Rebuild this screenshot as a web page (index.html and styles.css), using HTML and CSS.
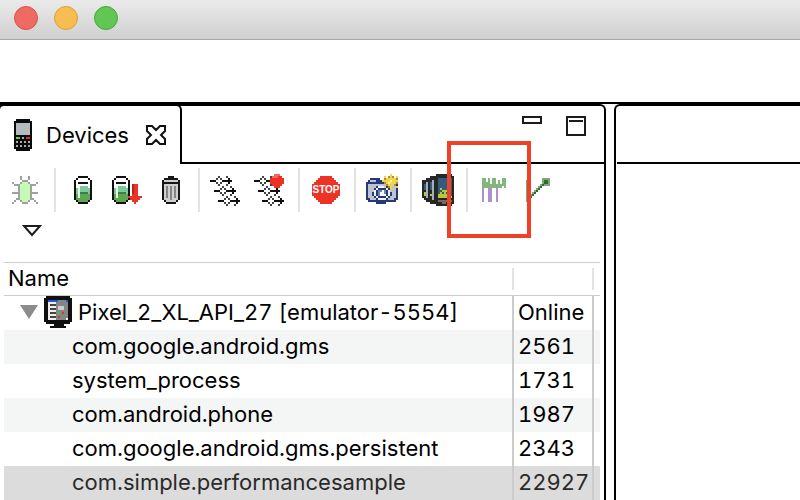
FILE: index.html
```html
<!DOCTYPE html>
<html lang="en">
<head>
<meta charset="utf-8">
<title>Devices</title>
<link rel="stylesheet" href="styles.css">
</head>
<body>
<header class="titlebar">
  <button class="light light-close" aria-label="Close"></button>
  <button class="light light-minimize" aria-label="Minimize"></button>
  <button class="light light-zoom" aria-label="Zoom"></button>
</header>
<div class="coolbar"></div>
<main class="workbench">
  <section class="panel panel-devices">
    <div class="tabs">
      <div class="tab">
        <svg class="icon" viewBox="0 -.5 16 16">
          <path stroke="#0a0a0a" d="M3 0h7M2 1h9M2 2h9M2 3h9M2 4h9M2 5h9M2 6h9M2 7h9M2 8h9M2 9h9M2 10h9M2 11h9M2 12h9M2 13h9M2 14h9M3 15h7"/>
          <path stroke="#b4babd" d="M3 2h7M3 3h7M3 4h7M3 5h7M3 6h7M3 7h7"/>
          <path stroke="#55dd33" d="M3 9h2"/><path stroke="#e32b20" d="M8 9h2"/>
          <path stroke="#aaa" d="M6 9h1M3 11h1M5 11h1M7 11h1M9 11h1M3 13h1M5 13h1M7 13h1M9 13h1"/>
        </svg>
        <span class="tab-title">Devices</span>
        <button class="tab-close" aria-label="Close tab">
          <svg width="22" height="22" viewBox="0 0 22 22"><path fill="#fff" stroke="#111" stroke-width="2" d="M2 2h5l4 4 4-4h5v5l-4 4 4 4v5h-5l-4-4-4 4H2v-5l4-4-4-4z"/></svg>
        </button>
      </div>
      <div class="tab-space">
        <button class="pane-button" aria-label="Minimize view"><svg width="20" height="20" viewBox="0 0 20 20"><path fill="#fff" stroke="#1b1b1b" stroke-width="2" d="M1 1h18v6H1z"/></svg></button>
        <button class="pane-button" aria-label="Maximize view"><svg width="20" height="20" viewBox="0 0 20 20"><path fill="#fff" stroke="#1b1b1b" stroke-width="2" d="M1 1h18v18H1zM3 5h14"/></svg></button>
      </div>
    </div>
    <div class="toolbar">
      <button class="tool" aria-label="Debug">
        <svg class="icon" viewBox="0 -.5 16 16">
          <path stroke="#a0a0a0" d="M5 1h1M9 1h1M5 2h1M9 2h1M6 3h3M1 4h1M5 4h1M9 4h1M13 4h1M2 5h2M4 5h1M10 5h1M11 5h2M4 6h1M10 6h1M4 7h1M10 7h1M4 8h1M10 8h1M1 9h4M10 9h4M4 10h1M10 10h1M4 11h1M10 11h1M3 12h2M10 12h2M2 13h1M5 13h1M9 13h1M12 13h1M1 14h1M6 14h3M13 14h1"/>
          <path stroke="#c6fbb6" d="M6 4h3M5 5h5M5 6h5M5 7h5M5 8h5M5 9h5M5 10h5M5 11h5M5 12h5M6 13h3"/>
        </svg>
      </button>
      <span class="divider"></span>
      <button class="tool" aria-label="Update Heap">
        <svg class="icon" viewBox="0 -.5 16 16">
          <g id="jar">
            <path stroke="#fff" d="M6 2h5M5 3h7M6 4h5M5 5h7M5 6h7"/>
            <path stroke="#7dcb9a" d="M7 6h4M5 7h7M5 8h7M5 9h7"/>
            <path stroke="#3f7c4d" d="M6 9h5"/>
            <path stroke="#5fa653" d="M5 10h7M5 11h7M5 12h7M5 13h7M6 14h5"/>
            <path stroke="#e4f2e4" d="M6 7h1M6 8h1M6 9h1M6 10h1M6 11h1"/>
            <path stroke="#111" d="M6 1h5M5 2h1M11 2h1M4 3h1M12 3h1M4 4h1M6 4h5M12 4h1M4 5h1M12 5h1M4 6h1M12 6h1M4 7h1M12 7h1M4 8h1M12 8h1M4 9h1M12 9h1M4 10h1M12 10h1M4 11h1M12 11h1M4 12h1M12 12h1M5 13h1M11 13h1M6 14h5"/>
          </g>
        </svg>
      </button>
      <button class="tool" aria-label="Dump HPROF file">
        <svg class="icon" viewBox="0 -.5 16 16">
          <use href="#jar" x="-3"/>
          <path stroke="#e8352b" d="M11 5h3M11 6h3M11 7h3M11 8h3M11 9h3M11 10h3M9 11h7M10 12h5M11 13h3M12 14h1"/>
          <path stroke="#b9231c" d="M11 5h1M11 6h1M11 7h1M11 8h1M11 9h1"/>
        </svg>
      </button>
      <button class="tool" aria-label="Cause GC">
        <svg class="icon" viewBox="0 -.5 16 16">
          <path stroke="#cfcfcf" d="M5 3h7M5 5h7M5 6h7M5 7h7M5 8h7M5 9h7M5 10h7M5 11h7M5 12h7M6 13h5"/>
          <path stroke="#858585" d="M6 6h1M8 6h1M10 6h1M6 7h1M8 7h1M10 7h1M6 8h1M8 8h1M10 8h1M6 9h1M8 9h1M10 9h1M6 10h1M8 10h1M10 10h1M6 11h1M8 11h1M10 11h1M8 12h1"/>
          <path stroke="#161616" d="M7 1h3M5 2h7M4 3h1M12 3h1M4 4h9M4 5h1M12 5h1M4 6h1M12 6h1M4 7h1M12 7h1M4 8h1M12 8h1M4 9h1M12 9h1M4 10h1M12 10h1M4 11h1M12 11h1M4 12h1M12 12h1M5 13h1M11 13h1M6 14h5"/>
        </svg>
      </button>
      <span class="divider"></span>
      <button class="tool" aria-label="Update Threads">
        <svg class="icon" viewBox="0 -.5 16 16">
          <g id="threads">
            <g id="thread">
              <path stroke="#444" d="M4 1h1M3 2h1M5 2h1M3 4h1M5 4h1M4 5h1M8 1h1M8 5h1"/>
              <path stroke="#111" d="M0 3h3M6 3h5M9 2h1M9 4h1"/>
            </g>
            <use href="#thread" x="2" y="5"/>
            <use href="#thread" x="4" y="10"/>
          </g>
        </svg>
      </button>
      <button class="tool" aria-label="Start Method Profiling">
        <svg class="icon" viewBox="0 -.5 16 16">
          <use href="#threads"/>
          <path stroke="#ec3023" d="M10 0h3M9 1h5M8 2h7M8 3h7M8 4h7M9 5h5M10 6h3"/>
          <path stroke="#f4685b" d="M10 0h3M9 1h3"/>
        </svg>
      </button>
      <span class="divider"></span>
      <button class="tool" aria-label="Stop Process">
        <svg class="icon" viewBox="0 -.5 16 16">
          <path stroke="#ec3325" d="M5 1h6M4 2h8M3 3h10M2 4h12M1 5h14M1 6h14M1 7h14M1 8h14M1 9h14M1 10h14M2 11h12M3 12h10M4 13h8M5 14h6"/>
          <text class="stop-label" x="8" y="9" text-anchor="middle">STOP</text>
        </svg>
      </button>
      <span class="divider"></span>
      <button class="tool" aria-label="Screen Capture">
        <svg class="icon" viewBox="0 -.5 16 16">
          <path stroke="#263a78" d="M2 2h5M1 3h7M0 4h15M0 5h16M0 6h16M0 7h16M0 8h16M0 9h16M0 10h16M0 11h16M0 12h16M1 13h14M5 14h5"/>
          <path stroke="#bcc3d3" d="M2 3h3M1 5h9M1 6h4M11 6h4M1 7h3M12 7h3M1 8h3M12 8h3M1 9h2M13 9h2M1 10h2M13 10h2M1 11h3M12 11h3M2 12h3M11 12h3"/>
          <path stroke="#f1f5fa" d="M6 6h4M5 7h1M10 7h1M4 8h1M11 8h1M4 9h1M11 9h1M4 10h1M11 10h1M5 11h1M10 11h1M6 12h4"/>
          <path stroke="#6f86b5" d="M6 8h4M6 9h4M6 10h4"/>
          <path stroke="#fff" d="M8 8h1M7 9h2M7 10h3"/>
          <path stroke="#f3d34a" d="M12 0h1M9 1h1M12 1h1M15 1h1M10 2h5M10 3h2M13 3h2M8 3h2M15 3h1M10 4h5M11 5h3M9 6h1M12 6h1M15 6h1M12 7h1"/>
          <path stroke="#fff7c2" d="M12 3h1M11 4h1"/>
          <path stroke="#b58a32" d="M11 1h1M13 1h1M9 2h1M15 2h1M9 4h1M15 4h1M10 5h1M14 5h1M11 6h1"/>
        </svg>
      </button>
      <span class="divider"></span>
      <button class="tool" aria-label="Dump View Hierarchy">
        <svg class="icon" viewBox="0 -.5 16 16">
          <path stroke="#262626" d="M7 0h8M4 1h12M2 2h14M0 3h16M0 4h16M0 5h16M0 6h16M0 7h16M0 8h16M0 9h16M0 10h16M0 11h16M1 12h15M2 13h14M4 14h12M7 15h8"/>
          <path stroke="#315c7e" d="M8 2h7M8 3h7M8 4h7M8 5h7M8 6h7M8 7h7M8 8h7M8 9h7M8 10h7M8 11h7"/>
          <path stroke="#9fb0ba" d="M5 3h1M5 4h1M5 5h1M5 6h1M5 7h1M5 8h1M5 9h1M5 10h1M5 11h1M5 12h1M2 4h1M2 5h1M2 6h1M2 7h1M2 8h1M2 9h1M2 10h1M2 11h1"/>
          <path stroke="#315c7e" d="M4 4h1M4 5h1M4 6h1M4 7h1M1 5h1M1 6h1M1 7h1"/>
          <path stroke="#b3ca3b" d="M9 7h1M13 7h1M10 8h3M9 9h5M8 10h6M8 11h7M1 9h1M1 10h1M4 10h1"/>
          <path stroke="#31547a" d="M10 9h1M12 9h1"/>
          <path stroke="#7b6862" d="M8 13h7M10 14h2"/>
        </svg>
      </button>
      <span class="divider"></span>
      <button class="tool" aria-label="Capture System Trace">
        <svg class="icon" viewBox="0 -.5 16 16">
          <path stroke="#82b67f" d="M2 2h2M5 2h1M7 2h2M12 2h2M2 3h2M5 3h1M7 3h2M10 3h1M12 3h2M2 4h4M7 4h2M10 4h1M12 4h2M2 5h12M2 6h10M13 6h1"/>
          <path stroke="#ae90cb" d="M2 7h1M5 7h2M9 7h1M2 8h1M5 8h2M9 8h1M2 9h1M5 9h2M9 9h1M2 10h1M5 10h2M9 10h1M2 11h1M5 11h2M9 11h1M2 12h1M5 12h2M9 12h1M2 13h1M5 13h2M9 13h1"/>
        </svg>
      </button>
      <button class="tool" aria-label="Start OpenGL Trace">
        <svg class="icon" viewBox="0 -.5 16 16">
          <path stroke="#7fa878" d="M2 3h1M2 4h1M2 5h1M2 6h1M2 7h1M2 8h1M2 9h1M2 10h1M2 11h1M2 12h1M2 13h1M10 2h4M10 3h4M10 4h4M10 5h4"/>
          <path stroke="#2f6b2b" d="M11 3h2M11 4h2M10 5h1M9 6h1M8 7h1M7 8h1M6 9h1M5 10h1M4 11h1M3 12h1"/>
          <path stroke="#7fa878" d="M9 5h1M8 6h1M7 7h1M6 8h1M5 9h1M4 10h1"/>
        </svg>
      </button>
      <span class="callout"></span>
    </div>
    <div class="menu-row">
      <button class="view-menu" aria-label="View menu"><svg width="20" height="12" viewBox="0 0 20 12"><path fill="#fff" stroke="#1b1b1b" stroke-width="2" d="M2 1h16l-8 9z"/></svg></button>
    </div>
    <table class="devices">
      <colgroup><col><col class="col-state"><col class="col-rest"></colgroup>
      <thead>
        <tr><th scope="col"><span class="head">Name</span></th><th><span class="head"></span></th><th></th></tr>
      </thead>
      <tbody>
        <tr><td><div class="device">
          <svg class="twisty" width="18" height="14" viewBox="0 0 18 14"><path fill="#8c8c8c" d="M0 0h18L9 14z"/></svg>
          <svg class="icon" viewBox="0 -.5 16 16">
            <path stroke="#101010" d="M2 0h12M1 1h14M1 2h14M1 3h14M1 4h14M1 5h14M1 6h14M1 7h14M1 8h14M1 9h14M1 10h14M1 11h14M1 12h14M2 13h12M6 14h5M4 15h8"/>
            <path stroke="#858585" d="M3 2h10M3 3h10M3 4h10M3 5h10M3 6h10M3 7h10M3 8h10M3 9h10M3 10h10M3 11h10"/>
            <path stroke="#2455dc" d="M3 2h5M12 2h1"/>
            <path stroke="#eee" d="M3 3h4M3 4h1M3 5h4M3 6h1M3 7h4M3 8h1M3 9h4M3 10h1M3 11h4M12 11h1"/>
            <path stroke="#444" d="M4 4h3M4 6h3M4 8h3M4 10h3"/>
            <path stroke="#c8d0d4" d="M8 5h3M8 6h3"/>
            <path stroke="#41c840" d="M8 8h1"/><path stroke="#d33" d="M10 8h1M8 10h1"/>
          </svg>
          <span>Pixel_2_XL_API_27 [emulator-5554]</span></div></td><td>Online</td><td></td></tr>
        <tr><td class="process">com.google.android.gms</td><td>2561</td><td></td></tr>
        <tr><td class="process">system_process</td><td>1731</td><td></td></tr>
        <tr><td class="process">com.android.phone</td><td>1987</td><td></td></tr>
        <tr><td class="process">com.google.android.gms.persistent</td><td>2343</td><td></td></tr>
        <tr class="selected"><td class="process">com.simple.performancesample</td><td>22927</td><td></td></tr>
      </tbody>
    </table>
  </section>
  <section class="panel panel-detail">
    <div class="detail-tabs"></div>
  </section>
</main>
</body>
</html>
```
FILE: styles.css
```css
* {
  box-sizing: border-box;
}

body {
  margin: 0;
  min-height: 100vh;
  display: flex;
  flex-direction: column;
  overflow: hidden;
  background: #fff;
  color: #000;
  font: 22px/32px Inter, "Liberation Sans", sans-serif;
  font-variant-numeric: tabular-nums;
}

button {
  padding: 0;
  border: 0;
  background: none;
  color: inherit;
  font: inherit;
}

svg {
  display: block;
  flex: none;
}

.icon {
  width: 32px;
  height: 32px;
  shape-rendering: crispEdges;
}

.titlebar {
  display: flex;
  gap: 16px;
  height: 40px;
  padding: 6px 14px;
  border-bottom: 1px solid #a8a8a8;
  background: linear-gradient(#eaeaea, #d0d0d0);
}

.light {
  width: 24px;
  height: 24px;
  border: 1px solid #d9534a;
  border-radius: 50%;
  background: #ed6b60;
}

.light-minimize {
  border-color: #dba03c;
  background: #f6be50;
}

.light-zoom {
  border-color: #4aa73c;
  background: #62c655;
}

.coolbar {
  height: 62px;
}

.workbench {
  flex: 1;
  display: grid;
  grid-template-columns: minmax(0, 606fr) minmax(0, 186fr);
  column-gap: 8px;
  border-top: 2px solid #000;
}

.panel {
  border: 2px solid #000;
  border-bottom: 0;
  border-radius: 6px 6px 0 0;
}

.panel-devices {
  margin-left: -2px;
}

.panel-detail {
  border-right: 0;
  border-top-right-radius: 0;
}

.detail-tabs {
  height: 58px;
  margin-left: 1px;
  border-bottom: 2px solid #000;
}

.tabs {
  display: flex;
  height: 58px;
}

.tab {
  display: flex;
  align-items: center;
  width: 182px;
  margin-top: -2px;
  padding: 0 13px 0 10px;
  border-top: 2px solid #000;
  border-right: 2px solid #000;
  border-top-right-radius: 6px;
}

.tab-title {
  margin-left: 4px;
}

.tab-close {
  margin-left: auto;
}

.tab-space {
  flex: 1;
  display: flex;
  justify-content: flex-end;
  align-items: flex-start;
  gap: 24px;
  padding: 10px 18px 0 0;
  border-bottom: 2px solid #000;
}

.toolbar {
  position: relative;
  display: flex;
  align-items: center;
  height: 52px;
  padding: 0 4px;
}

.tool {
  padding: 0 6px;
}

.divider {
  width: 2px;
  height: 44px;
  margin: 0 4px 0 6px;
  background: #e2e2e2;
}

.stop-label {
  fill: #fff;
  font: bold 5px "Liberation Sans", sans-serif;
}

.callout {
  position: absolute;
  top: -23px;
  left: 447px;
  width: 84px;
  height: 97px;
  border: 4px solid #ee4128;
  pointer-events: none;
}

.menu-row {
  height: 46px;
  padding: 9px 22px;
}

.view-menu {
  display: block;
}

.devices {
  width: calc(100% - 8px);
  margin: 0 4px;
  border-collapse: separate;
  border-spacing: 0;
  table-layout: fixed;
}

.col-state {
  width: 80px;
}

.col-rest {
  width: 6px;
}

.devices th {
  height: 34px;
  padding: 0;
  border-top: 1px solid #ccc;
  border-bottom: 1px solid #ccc;
  font-weight: 400;
  text-align: left;
}

.head {
  display: block;
  height: 22px;
  padding-left: 4px;
  border-right: 2px solid #e2e2e2;
  line-height: 20px;
}

.devices td {
  height: 34px;
  padding: 0 0 0 4px;
  border-right: 2px solid #ccc;
  vertical-align: top;
  white-space: nowrap;
}

.devices td:last-child {
  padding: 0;
  border-right: 0;
}

.devices td.process {
  padding-left: 68px;
}

.devices tbody tr:nth-child(even) {
  background: #f4f5f5;
}

.devices tbody tr.selected {
  background: #dcdcdc;
  color: #2a2a2a;
}

.device {
  display: flex;
  align-items: center;
  gap: 4px;
  padding-left: 12px;
}
```
